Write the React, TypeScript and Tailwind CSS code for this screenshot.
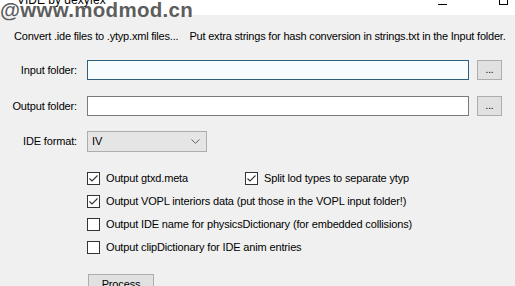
import React from 'react';

const font = { fontFamily: '"Liberation Sans", Arial, sans-serif' };

const Check: React.FC<{ checked?: boolean }> = ({ checked }) => (
  <span className="flex h-[13px] w-[13px] shrink-0 items-center justify-center border border-[#333333] bg-white">
    {checked && (
      <svg width="11" height="11" viewBox="0 0 11 11">
        <path d="M1.5 5.5 L4 8 L9.5 2.5" fill="none" stroke="#333333" strokeWidth="1.1" />
      </svg>
    )}
  </span>
);

const Option: React.FC<{ checked?: boolean; label: string }> = ({ checked, label }) => (
  <label className="flex items-center gap-[6px] whitespace-nowrap">
    <Check checked={checked} />
    <span className="leading-none">{label}</span>
  </label>
);

const App: React.FC = () => {
  return (
    <div
      className="relative h-[286px] w-[515px] overflow-hidden bg-[#f0f0f0] text-[11px] tracking-[-0.15px] text-black"
      style={font}
    >
      {/* title bar */}
      <div className="relative flex h-[15px] items-end bg-white">
        <span className="ml-[17px] mb-[9px] text-[12px] leading-none tracking-normal">VIDE by dexyfex</span>
        <div className="ml-auto mr-[52px] mb-[10px] h-px w-[9px] bg-black" />
        <div className="mr-[7px] mb-[10px] h-[9px] w-[9px] border border-black" />
      </div>

      {/* watermark */}
      <div className="pointer-events-none absolute left-[0px] top-[-5px] text-[20.5px] font-bold tracking-[0.3px] text-[#4d4d4d] opacity-90">
        @www.modmod.cn
      </div>

      <div className="flex gap-[11px] whitespace-nowrap px-[14px] pt-[13px] leading-[16px] tracking-[-0.2px]">
        <span>Convert .ide files to .ytyp.xml files...</span>
        <span>Put extra strings for hash conversion in strings.txt in the Input folder.</span>
      </div>

      <div className="mt-[16px] flex items-center">
        <span className="w-[77px] text-right">Input folder:</span>
        <div className="ml-[10px] h-[20px] w-[382px] border border-[#2e5f7f] bg-[#f7fdff]" />
        <button className="ml-[8px] h-[20px] w-[25px] border border-[#adadad] bg-[#e1e1e1] text-[10px] leading-none">...</button>
      </div>

      <div className="mt-[16px] flex items-center">
        <span className="w-[77px] text-right">Output folder:</span>
        <div className="ml-[10px] h-[20px] w-[382px] border border-[#7a7a7a] bg-white" />
        <button className="ml-[8px] h-[20px] w-[25px] border border-[#adadad] bg-[#e1e1e1] text-[10px] leading-none">...</button>
      </div>

      <div className="mt-[15px] flex items-center">
        <span className="w-[77px] text-right">IDE format:</span>
        <div className="ml-[10px] flex h-[21px] w-[120px] items-center border border-[#adadad] bg-[#e5e5e5] pl-[4px] pr-[6px]">
          <span>IV</span>
          <svg className="ml-auto" width="9" height="5" viewBox="0 0 9 5">
            <path d="M0.5 0.5 L4.5 4.3 L8.5 0.5" fill="none" stroke="#606060" strokeWidth="1" />
          </svg>
        </div>
      </div>

      <div className="ml-[87px] mt-[20px] flex flex-col gap-[10px]">
        <div className="flex">
          <div className="w-[158px]">
            <Option checked label="Output gtxd.meta" />
          </div>
          <Option checked label="Split lod types to separate ytyp" />
        </div>
        <Option checked label="Output VOPL interiors data (put those in the VOPL input folder!)" />
        <Option label="Output IDE name for physicsDictionary (for embedded collisions)" />
        <Option label="Output clipDictionary for IDE anim entries" />
      </div>

      <button className="ml-[88px] mt-[20px] h-[23px] w-[66px] border border-[#adadad] bg-[#e1e1e1] pb-[2px] leading-none">
        Process
      </button>
    </div>
  );
};

export default App;
